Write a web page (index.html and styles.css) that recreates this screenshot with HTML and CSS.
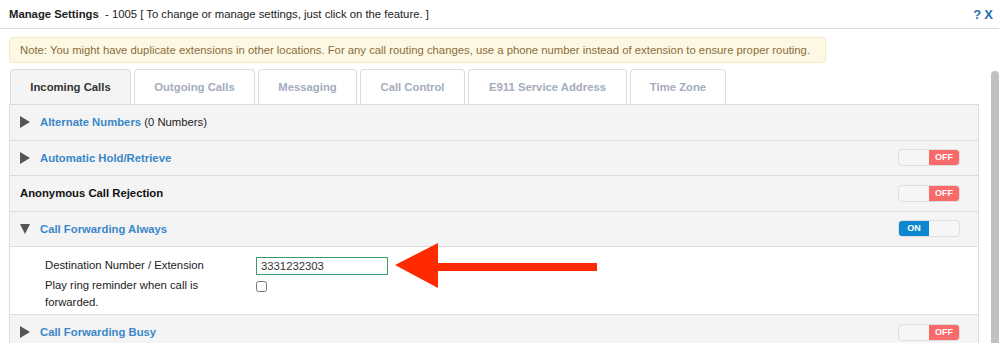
FILE: index.html
```html
<!DOCTYPE html>
<html lang="en">
<head>
  <meta charset="UTF-8" />
  <title>Manage Settings</title>
  <link rel="stylesheet" href="styles.css">
</head>
<body>

  <div class="header">
    <div><b>Manage Settings</b>&nbsp; - 1005 [ To change or manage settings, just click on the feature. ]</div>
    <div class="header-links"><a href="#">?</a> <a href="#">X</a></div>
  </div>

  <div class="note">Note: You might have duplicate extensions in other locations. For any call routing changes, use a phone number instead of extension to ensure proper routing.</div>

  <div class="tabs">
    <div class="tab tab-incoming active">Incoming Calls</div>
    <div class="tab tab-outgoing">Outgoing Calls</div>
    <div class="tab tab-messaging">Messaging</div>
    <div class="tab tab-control">Call Control</div>
    <div class="tab tab-e911">E911 Service Address</div>
    <div class="tab tab-zone">Time Zone</div>
  </div>

  <div class="panel">
    <div class="row">
      <span class="caret"></span>
      <span class="title">Alternate Numbers</span>&nbsp;(0 Numbers)
    </div>
    <div class="row">
      <span class="caret"></span>
      <span class="title">Automatic Hold/Retrieve</span>
      <div class="toggle off"><span></span><span>OFF</span></div>
    </div>
    <div class="row">
      <span class="title plain">Anonymous Call Rejection</span>
      <div class="toggle off"><span></span><span>OFF</span></div>
    </div>
    <div class="row">
      <span class="caret down"></span>
      <span class="title">Call Forwarding Always</span>
      <div class="toggle on"><span>ON</span><span></span></div>
    </div>
    <div class="details">
      <div class="field">
        <label>Destination Number / Extension</label>
        <input type="text" value="3331232303">
      </div>
      <div class="field">
        <label>Play ring reminder when call is forwarded.</label>
        <input type="checkbox">
      </div>
    </div>
    <div class="row">
      <span class="caret"></span>
      <span class="title">Call Forwarding Busy</span>
      <div class="toggle off"><span></span><span>OFF</span></div>
    </div>
  </div>

  <svg class="arrow" width="206" height="48" viewBox="0 0 206 48">
    <polygon points="0,22 43,0 43,20 202,20 202,28 43,28 43,45" fill="#ff2a00"/>
  </svg>

  <div class="scrollbar"></div>

</body>
</html>
```

FILE: styles.css
```css
body {
  margin: 0;
  font-family: "Liberation Sans", Arial, sans-serif;
  font-size: 11.3px;
  color: #222;
  background: #fff;
  position: relative;
  height: 343px;
  overflow: hidden;
}
.header {
  display: flex;
  justify-content: space-between;
  align-items: center;
  height: 28px;
  padding: 0 6px 0 9px;
  border-bottom: 1px solid #dcdcdc;
}
.header-links a {
  color: #1f6fb2;
  font-weight: bold;
  font-size: 13px;
  text-decoration: none;
}
.note {
  margin: 8px 0 0 9px;
  width: 795px;
  padding: 0 10px;
  line-height: 24px;
  white-space: nowrap;
  background: #fcf8e3;
  border: 1px solid #f6e8c3;
  border-radius: 4px;
  color: #8a6d3b;
}
.tabs {
  display: flex;
  gap: 3px;
  margin: 6px 0 0 10px;
}
.tab {
  box-sizing: border-box;
  height: 35px;
  line-height: 34px;
  text-align: center;
  white-space: nowrap;
  border: 1px solid #dcdcdc;
  border-bottom: none;
  border-radius: 4px 4px 0 0;
  font-weight: bold;
  color: #a4adbb;
  background: #fff;
}
.tab.active {
  color: #333;
  background: #f4f4f4;
}
.tab-incoming { width: 121px; }
.tab-outgoing { width: 121px; }
.tab-messaging { width: 99px; }
.tab-control { width: 105px; }
.tab-e911 { width: 159px; }
.tab-zone { width: 96px; }
.panel {
  margin-left: 9px;
  width: 968px;
  border: 1px solid #dcdcdc;
  border-bottom: none;
}
.row {
  display: flex;
  align-items: center;
  height: 34.5px;
  padding: 0 18px 0 10px;
  background: #f4f4f4;
  border-bottom: 1px solid #dcdcdc;
}
.caret {
  width: 0;
  height: 0;
  border-left: 10px solid #555;
  border-top: 6px solid transparent;
  border-bottom: 6px solid transparent;
  margin-right: 10px;
}
.caret.down {
  border-left: 5px solid transparent;
  border-right: 5px solid transparent;
  border-top: 10px solid #555;
  border-bottom: none;
}
.title {
  font-weight: bold;
  color: #3a87c8;
}
.title.plain {
  color: #111;
}
.toggle {
  margin-left: auto;
  display: flex;
  width: 60px;
  height: 15px;
  border: 1px solid #dedede;
  border-radius: 4px;
  overflow: hidden;
  background: #f6f6f6;
}
.toggle span {
  flex: 1;
  font-size: 9px;
  font-weight: bold;
  color: #fff;
  text-align: center;
  line-height: 15px;
}
.toggle.off span:last-child {
  background: #f96b6b;
}
.toggle.on span:first-child {
  background: #0d87cf;
}
.details {
  display: flex;
  flex-direction: column;
  gap: 2px;
  background: #fff;
  padding: 10px 0 3px 35px;
  border-bottom: 1px solid #dcdcdc;
}
.field {
  display: flex;
  align-items: flex-start;
}
.field label {
  width: 180px;
  margin-right: 31px;
  line-height: 17px;
}
.field input[type="text"] {
  box-sizing: border-box;
  width: 132px;
  height: 18px;
  margin: 0;
  padding: 0 4px;
  border: 1px solid #3b9b6a;
  font-family: "Liberation Sans", Arial, sans-serif;
  font-size: 11.3px;
  color: #333;
}
.field input[type="checkbox"] {
  width: 11px;
  height: 11px;
  margin: 4px 0 0 0;
}
.arrow {
  position: absolute;
  left: 395px;
  top: 243px;
}
.scrollbar {
  position: absolute;
  left: 991px;
  top: 71px;
  width: 8px;
  height: 290px;
  background: #c1c1c1;
  border-radius: 4px 4px 0 0;
}
```
